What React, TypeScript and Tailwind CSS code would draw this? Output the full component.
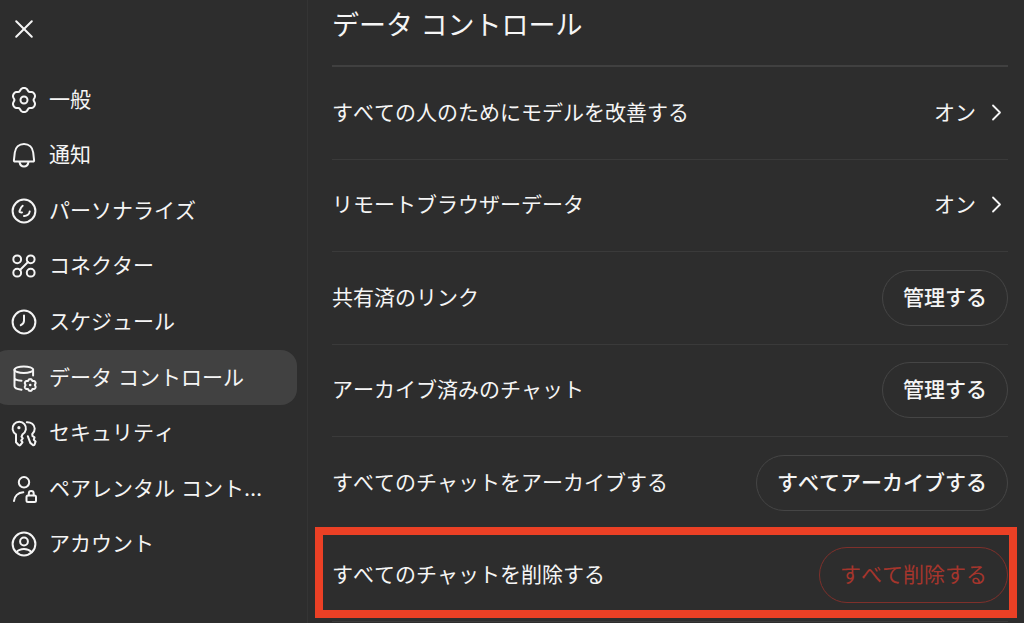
import React from "react";
import clsx from "clsx";

const gearPath = (cx: number, cy: number, radius: number, depth: number) => {
  const points: string[] = [];
  for (let deg = 0; deg < 360; deg += 4) {
    const a = (deg * Math.PI) / 180;
    const r = radius + depth * (Math.cos(6 * a) - 0.2 * Math.cos(12 * a));
    points.push(`${(cx + r * Math.sin(a)).toFixed(2)} ${(cy - r * Math.cos(a)).toFixed(2)}`);
  }
  return `M${points.join("L")}Z`;
};

const Icon = ({ children }: { children: React.ReactNode }) => (
  <svg
    viewBox="0 0 26 26"
    className="size-[26px] shrink-0 overflow-visible"
    fill="none"
    stroke="currentColor"
    strokeWidth={2}
    strokeLinecap="round"
    strokeLinejoin="round"
    aria-hidden="true"
  >
    {children}
  </svg>
);

const menu = [
  {
    label: "一般",
    icon: (
      <>
        <path d={gearPath(13, 13, 11, 1.2)} />
        <circle cx="13" cy="13" r="3.5" />
      </>
    ),
  },
  {
    label: "通知",
    icon: (
      <>
        <path d="M3.800 10.500C4.400 5.300 8.100 2 13 2s8.600 3.300 9.200 8.500l.9 7.800a1.200 1.200 0 0 1-1.200 1.300H4.100A1.200 1.200 0 0 1 2.900 18.300Z" />
        <path d="M8.500 20c.5 2.900 2.200 4.500 4.500 4.500s4-1.600 4.500-4.500" />
      </>
    ),
  },
  {
    label: "パーソナライズ",
    icon: (
      <>
        <circle cx="13" cy="13" r="11.400" />
        <path d="M11.700 7.800C9.700 9.300 9.300 11 8.500 13.200c-.2.800.5 1.300 2.500 1.200" />
        <path d="M18.700 13.500c-.3 2.500-2.700 4.700-5.700 4.500" />
      </>
    ),
  },
  {
    label: "コネクター",
    icon: (
      <>
        <circle cx="6.200" cy="6.300" r="3.900" />
        <circle cx="19.700" cy="6.300" r="3.900" />
        <circle cx="6.200" cy="19.700" r="3.900" />
        <circle cx="19.700" cy="19.700" r="3.900" />
        <path d="M9 17l8-8" />
      </>
    ),
  },
  {
    label: "スケジュール",
    icon: (
      <>
        <circle cx="13" cy="13" r="11.400" />
        <path d="M13 6.500v5.200c0 2-1.200 3.400-3.200 4.500" />
      </>
    ),
  },
  {
    label: "データ コントロール",
    active: true,
    icon: (
      <>
        <ellipse cx="12.800" cy="4.700" rx="9.300" ry="3.300" />
        <path d="M3.500 4.700v16.500c0 1.700 3 3 7 3.500M22.100 4.700v5.800M3.500 12.800c0 1.500 3 2.700 7 3" />
        <path d={gearPath(19.2, 20, 5.4, 0.6)} />
        <circle cx="19.200" cy="20" r="1.300" fill="currentColor" stroke="none" />
      </>
    ),
  },
  {
    label: "セキュリティ",
    icon: (
      <>
        <path d="M5 14.300A6.700 6.700 0 1 1 11.500 14.300L10.500 16.600l1.300 1.800-1.600 2 1.300 2-2.200 2.600c-.5.500-1.300.500-1.700 0L5 22.300Z" />
        <path d="M15.800 2.300c4.200-.2 7.700 2.200 7.900 6.200.1 2.200-.8 4-2.500 5.500l.3 2 2 1.400-.7 2.400 1.800 1.600-1 3c-.3.800-1.200 1-1.800.5l-2.500-2-2.500-6.700" />
        <circle cx="7.900" cy="7.700" r="1.600" fill="currentColor" stroke="none" />
      </>
    ),
  },
  {
    label: "ペアレンタル コント…",
    icon: (
      <>
        <circle cx="13" cy="6.300" r="5.200" />
        <path d="M3 25c.4-4.800 4-8.600 9.300-8.800" />
        <rect x="15.500" y="19.500" width="9.500" height="6.500" rx="1.500" />
        <path d="M17.800 19.200v-1.700a2.450 2.450 0 0 1 4.900 0v1.700" />
      </>
    ),
  },
  {
    label: "アカウント",
    icon: (
      <>
        <circle cx="13" cy="13" r="11.400" />
        <circle cx="13" cy="10.500" r="3.900" />
        <path d="M5.300 21.200c2-2.200 4.500-3.200 7.700-3.200s5.700 1 7.700 3.200" />
      </>
    ),
  },
];

type Setting = {
  label: string;
  value?: string;
  action?: string;
  danger?: boolean;
};

const settings: Setting[] = [
  { label: "すべての人のためにモデルを改善する", value: "オン" },
  { label: "リモートブラウザーデータ", value: "オン" },
  { label: "共有済のリンク", action: "管理する" },
  { label: "アーカイブ済みのチャット", action: "管理する" },
  { label: "すべてのチャットをアーカイブする", action: "すべてアーカイブする" },
  { label: "すべてのチャットを削除する", action: "すべて削除する", danger: true },
];

const Sidebar = () => (
  <aside className="w-[308px] shrink-0 border-r border-[#343434] pr-[10px]">
    <div className="flex h-[72px] items-start pt-4 pl-[11px]">
      <button type="button" aria-label="閉じる" className="cursor-pointer">
        <Icon>
          <path d="M5.200 5.200l15.600 15.600M20.800 5.200L5.200 20.800" />
        </Icon>
      </button>
    </div>
    <nav className="-ml-2 grid min-h-[500px] auto-rows-fr">
      {menu.map((item) => (
        <button
          key={item.label}
          type="button"
          aria-current={item.active ? "page" : undefined}
          className={clsx(
            "flex cursor-pointer items-center gap-3 rounded-2xl pr-6 pl-[19px] text-left whitespace-nowrap",
            item.active && "bg-[#414141]"
          )}
        >
          <Icon>{item.icon}</Icon>
          <span>{item.label}</span>
        </button>
      ))}
    </nav>
  </aside>
);

const SettingRow = ({ label, value, action, danger }: Setting) => (
  <li className="relative flex items-center justify-between border-b border-[#3a3a3a]">
    <span>{label}</span>
    {value && (
      <button
        type="button"
        aria-label={`${label} ${value}`}
        className="flex cursor-pointer items-center gap-2"
      >
        {value}
        <svg
          viewBox="0 0 24 24"
          className="size-6"
          fill="none"
          stroke="currentColor"
          strokeWidth={1.8}
          strokeLinecap="round"
          strokeLinejoin="round"
          aria-hidden="true"
        >
          <path d="M9 4.500l7 7-7 7" />
        </svg>
      </button>
    )}
    {action && (
      <button
        type="button"
        className={clsx(
          "h-14 cursor-pointer rounded-full border px-5",
          danger ? "border-[#7e302b] text-[#a5352c]" : "border-[#454545] font-medium"
        )}
      >
        {action}
      </button>
    )}
    {danger && (
      <div className="pointer-events-none absolute -top-[3px] -right-[9px] bottom-[3px] -left-[17px] border-8 border-[#eb4025]" />
    )}
  </li>
);

const App = () => {
  return (
    <div className="flex min-h-screen overflow-hidden bg-[#2d2d2d] font-[Inter,'Noto_Sans_CJK_JP',sans-serif] text-[21px] leading-8 text-[#f5f5f5] [font-kerning:none]">
      <Sidebar />
      <main className="min-w-0 flex-1 pr-4 pl-6">
        <h1 className="border-b-2 border-[#404040] pt-2 pb-[21px] text-[27px] leading-9">
          データ コントロール
        </h1>
        <ul className="grid min-h-[555px] auto-rows-fr">
          {settings.map((setting) => (
            <SettingRow key={setting.label} {...setting} />
          ))}
        </ul>
      </main>
    </div>
  );
};

export default App;
